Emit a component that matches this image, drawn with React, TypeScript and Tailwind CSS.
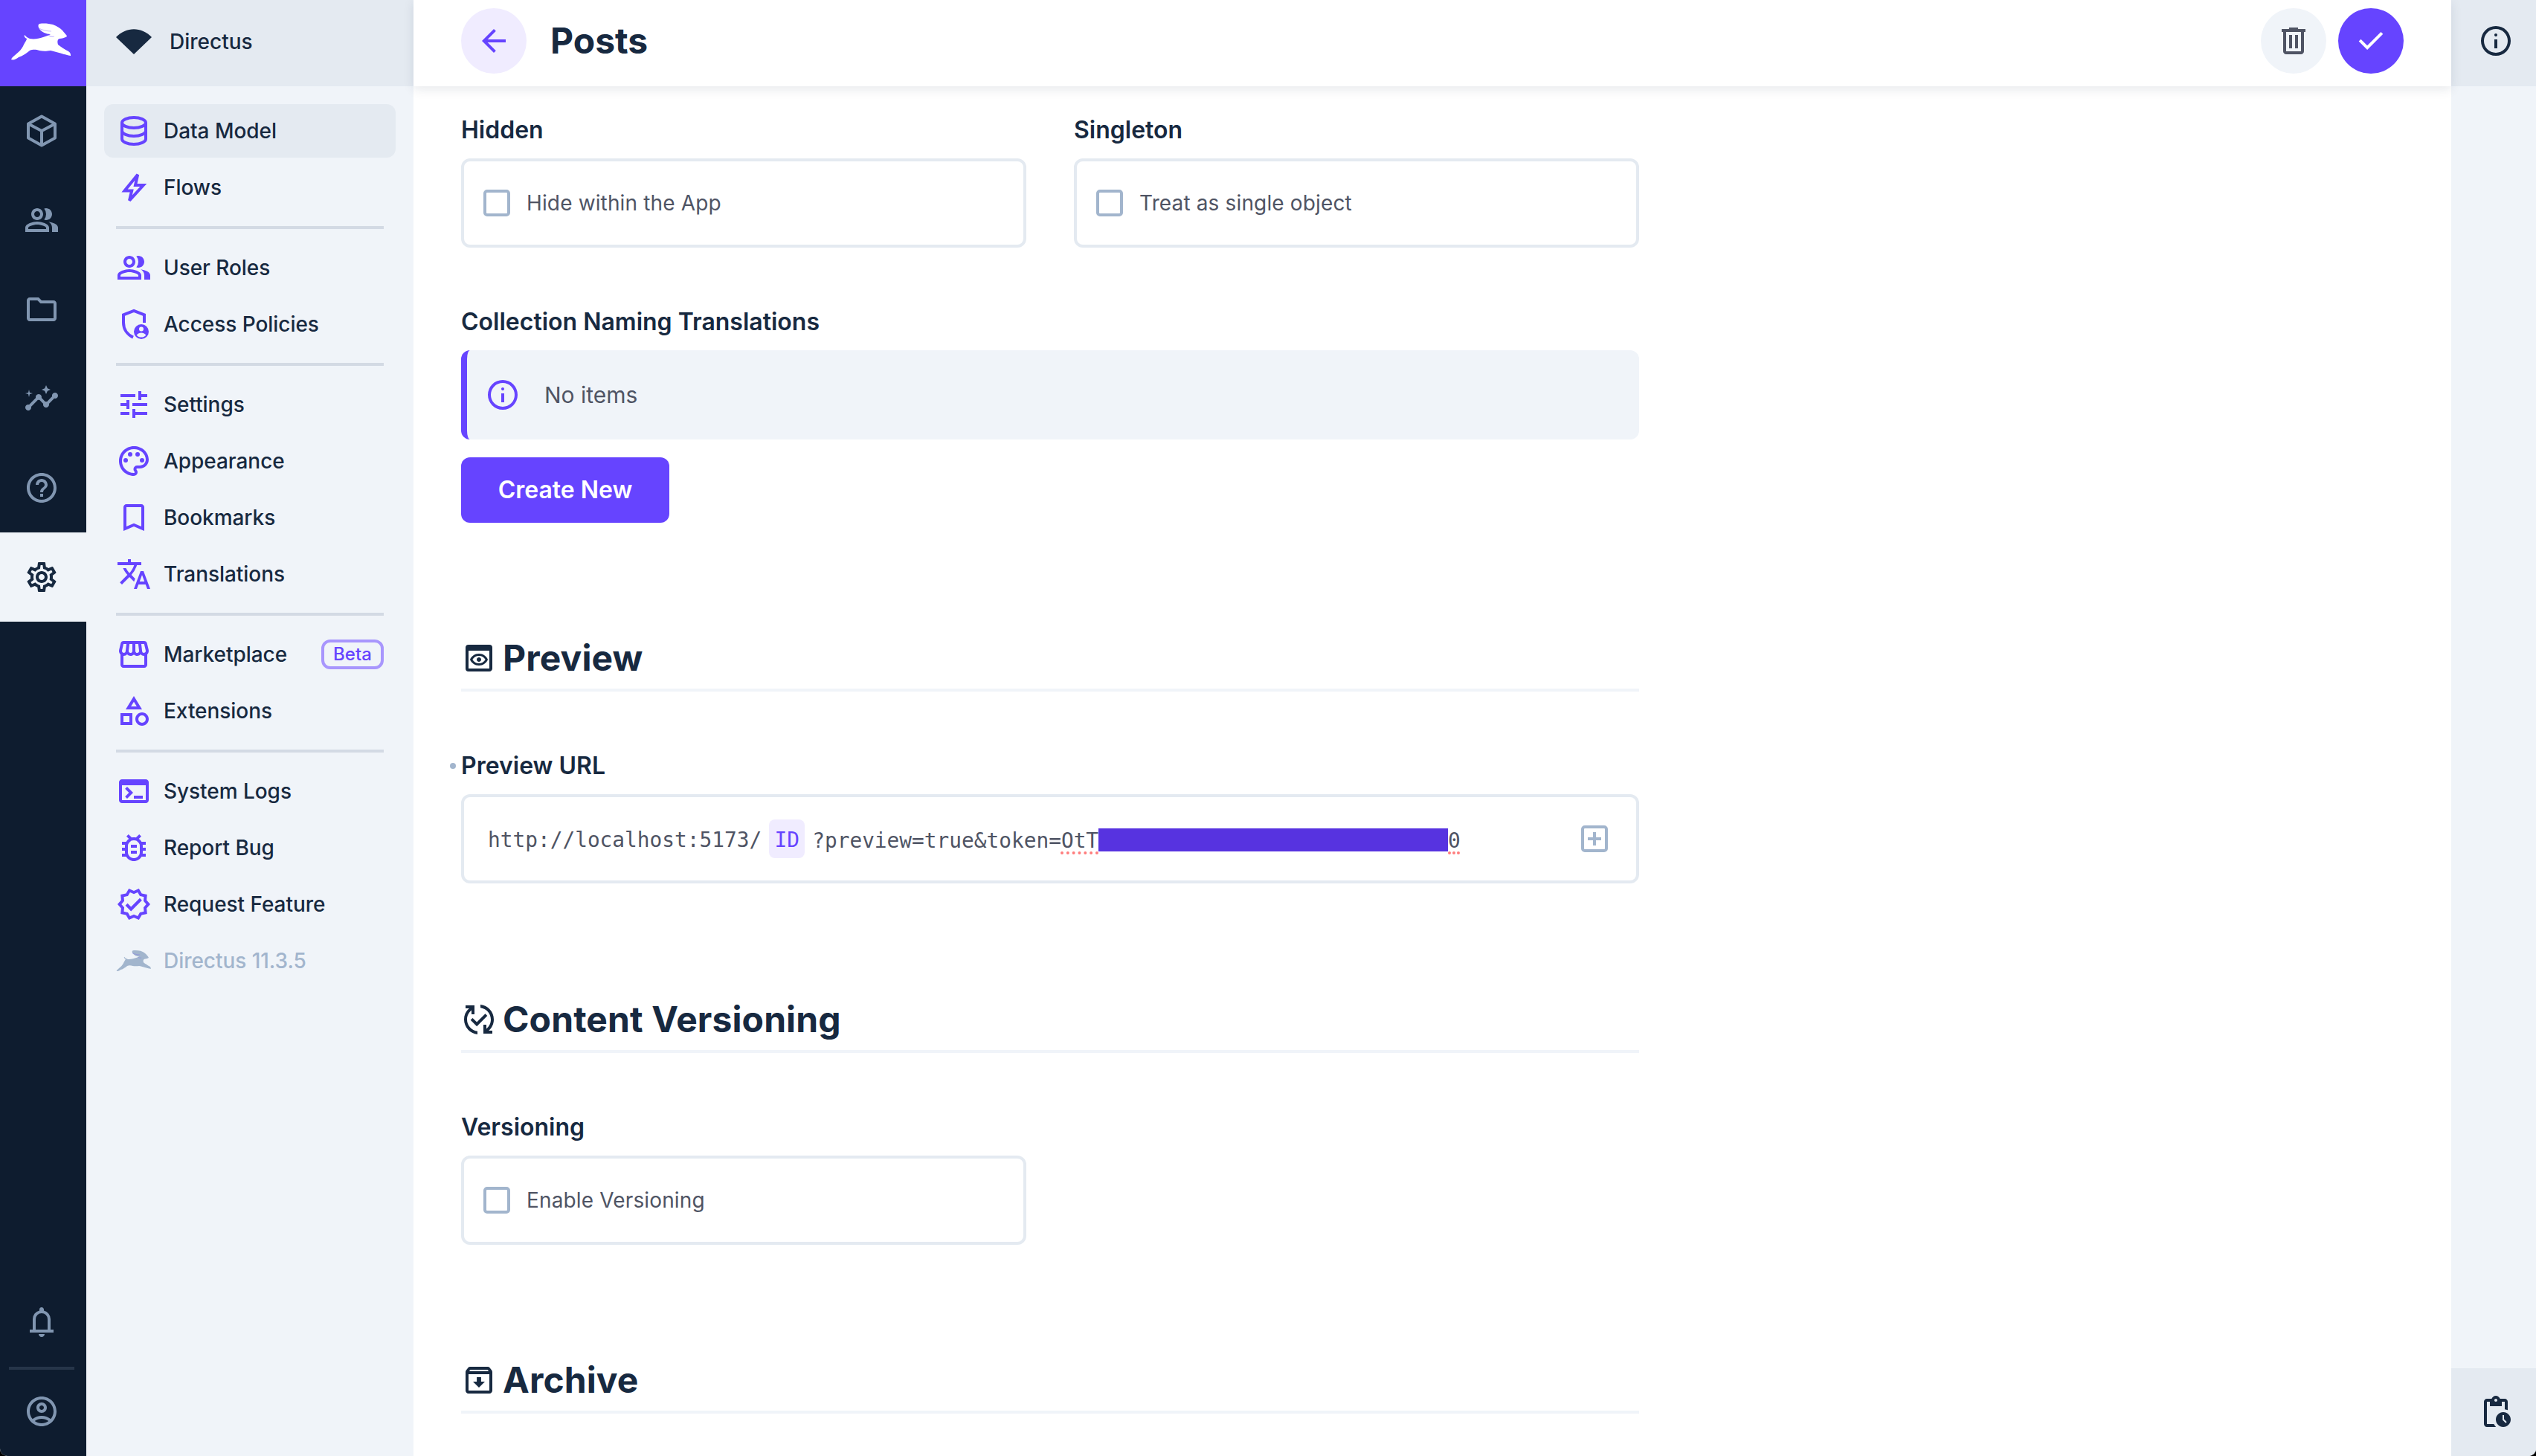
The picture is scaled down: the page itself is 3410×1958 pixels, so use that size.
import type { ReactNode } from "react"
import {
  MdOutlineAccountCircle,
  MdOutlineArchive,
  MdOutlineBookmarkBorder,
  MdOutlineBugReport,
  MdOutlineCategory,
  MdOutlineFolder,
  MdOutlineHelpOutline,
  MdOutlineInsights,
  MdOutlinePalette,
  MdOutlinePendingActions,
  MdOutlinePeopleAlt,
  MdOutlinePreview,
  MdOutlinePublishedWithChanges,
  MdOutlineSettings,
  MdOutlineStorefront,
  MdOutlineTranslate,
  MdOutlineTune,
  MdOutlineVerified,
} from "react-icons/md"

const infoPath =
  "M11 17h2v-6h-2v6Zm1-8q.425 0 .713-.288T13 8q0-.425-.288-.713T12 7q-.425 0-.713.288T11 8q0 .425.288.713T12 9Zm0 13q-2.075 0-3.9-.788t-3.175-2.137q-1.35-1.35-2.137-3.175T2 12q0-2.075.788-3.9t2.137-3.175q1.35-1.35 3.175-2.137T12 2q2.075 0 3.9.788t3.175 2.137q1.35 1.35 2.138 3.175T22 12q0 2.075-.788 3.9t-2.137 3.175q-1.35 1.35-3.175 2.138T12 22Zm0-2q3.35 0 5.675-2.325T20 12q0-3.35-2.325-5.675T12 4Q8.65 4 6.325 6.325T4 12q0 3.35 2.325 5.675T12 20Z"

function Sym({ d, className = "" }: { d: string; className?: string }) {
  return (
    <svg viewBox="0 0 24 24" fill="currentColor" className={`h-12 w-12 ${className}`}>
      <path d={d} />
    </svg>
  )
}

function CubeIcon() {
  return (
    <svg viewBox="0 0 24 24" fill="none" stroke="currentColor" strokeWidth="2" strokeLinejoin="round" className="h-12 w-12">
      <path d="M12 2.2 21 7.2V16.8L12 21.8 3 16.8V7.2Z" />
      <path d="M3 7.2 12 12 21 7.2M12 12V21.8" />
    </svg>
  )
}

function DatabaseIcon() {
  return (
    <svg viewBox="0 0 24 24" fill="none" stroke="currentColor" strokeWidth="2" className="h-12 w-12">
      <ellipse cx="12" cy="6.5" rx="8" ry="3.5" />
      <path d="M4 6.5v11c0 1.9 3.6 3.5 8 3.5s8-1.6 8-3.5v-11" />
      <path d="M4 12c0 1.9 3.6 3.5 8 3.5s8-1.6 8-3.5" />
    </svg>
  )
}

function BoltIcon() {
  return (
    <svg viewBox="0 0 24 24" fill="none" stroke="currentColor" strokeWidth="2" strokeLinejoin="miter" className="h-12 w-12">
      <path d="M14.6 3.4 5.8 14.2H10.6L9 20.8 18.4 10.5H13Z" />
    </svg>
  )
}

function ShieldPersonIcon() {
  return (
    <svg viewBox="0 0 24 24" className="h-12 w-12" fill="none" stroke="currentColor" strokeWidth="2">
      <path d="M19 11V5.7L12 3 5 5.7V11c0 4.400 2.600 8 6.500 9.800" />
      <circle cx="17" cy="17" r="5" fill="currentColor" stroke="none" />
      <circle cx="17" cy="15.300" r="1.500" fill="#f0f4f9" stroke="none" />
      <path d="M13.900 19.500c.8-1.200 1.900-1.700 3.100-1.700s2.300.5 3.100 1.700c-.8.8-1.900 1.300-3.100 1.300s-2.300-.5-3.100-1.300Z" fill="#f0f4f9" stroke="none" />
    </svg>
  )
}

// hand traced from the logo
function Rabbit({ className = "" }: { className?: string }) {
  return (
    <svg viewBox="14 30 83 52" className={className} fill="currentColor">
      <path d="M16 78C22 72 29 68 32 60 34 56 36 54 36 52 33 51 32 48 33 47 35 49 37 51 40 52 46 53 52 52 58 50 62 49 66 47 68 46 62 46 56 43 53 39 51 36 51 33 53 32 60 31 66 32 71 33 77 35 81 38 84 41 86 44 90 47 90 49 87 51 83 52 80 52 77 53 77 56 78 60 82 63 88 67 92 69 95 71 95 73 95 75 93 75 91 74 86 73 80 71 73 69 68 68 62 69 58 69 53 68 49 67 45 66 40 68 36 71 31 75 25 77 21 80 18 81 15 80 16 78Z" />
      <path d="M52 38C58 41 63 42 69 42M65 47C67 49 70 50 73 49" fill="none" stroke="#6644ff" strokeOpacity="0.35" strokeWidth="1.200" />
    </svg>
  )
}

function NavItem({ icon, label, active, faded, badge }: { icon: ReactNode; label: string; active?: boolean; faded?: boolean; badge?: string }) {
  return (
    <div className={`flex h-[72px] items-center rounded-xl pl-4 pr-4 ${active ? "bg-[#e4eaf1]" : ""}`}>
      <span className={`flex h-12 w-12 items-center justify-center ${faded ? "text-[#a2b5cd]" : "text-[#6644ff]"}`}>{icon}</span>
      <span className={`ml-4 flex-1 text-[28px] font-medium tracking-[-0.05px] ${faded ? "text-[#a2b5cd]" : "text-[#172940]"}`}>{label}</span>
      {badge && (
        <span className="flex h-10 w-[84px] items-center justify-center rounded-xl border-4 border-[#a896fd] text-[24px] font-medium text-[#6644ff]">
          {badge}
        </span>
      )}
    </div>
  )
}

function NavDivider() {
  return <div className="mx-4 my-4 h-1 bg-[#d3dae4]" />
}

function ModuleButton({ icon, active }: { icon: ReactNode; active?: boolean }) {
  return (
    <div className={`flex h-[120px] w-[116px] items-center pl-8 ${active ? "bg-[#f0f4f9] text-[#172940]" : "text-[#8196b1]"}`}>{icon}</div>
  )
}

function FieldLabel({ children }: { children: ReactNode }) {
  return <div className="mb-[18px] flex h-10 items-center text-[32px] font-semibold text-[#172940]">{children}</div>
}

function CheckboxField({ label, text }: { label: string; text: string }) {
  return (
    <div>
      <FieldLabel>{label}</FieldLabel>
      <div className="flex h-[120px] items-center rounded-xl border-4 border-[#e4eaf1] pl-[26px]">
        <span className="h-9 w-9 rounded-[5px] border-4 border-[#a2b5cd]" />
        <span className="ml-[22px] text-[28px] tracking-[0.14px] text-[#4f5464]">{text}</span>
      </div>
    </div>
  )
}

function SectionHeading({ icon, title, className = "" }: { icon: ReactNode; title: string; className?: string }) {
  return (
    <div className={`flex h-[75px] items-start border-b-4 border-[#f0f4f9] ${className}`}>
      <div className="flex h-[60px] items-center">
        <span className="flex h-12 w-12 items-center justify-center text-[#172940]">{icon}</span>
        <span className="ml-2 text-[48px] font-bold tracking-[0.1px] text-[#172940]">{title}</span>
      </div>
    </div>
  )
}

export default function App() {
  return (
    <div className="h-[1958px] w-[3410px] overflow-hidden bg-black font-['Inter',sans-serif]">
      <div className="flex h-full overflow-hidden rounded-b-[10px] bg-white">
        {/* module bar */}
        <aside className="flex w-[116px] shrink-0 flex-col bg-[#0e1c2f]">
          <div className="flex h-[116px] items-center justify-center bg-[#6644ff] pb-1 pr-[5px] text-white">
            <Rabbit className="h-[52px] w-[83px]" />
          </div>
          <ModuleButton icon={<CubeIcon />} />
          <ModuleButton icon={<MdOutlinePeopleAlt size={48} />} />
          <ModuleButton icon={<MdOutlineFolder size={48} />} />
          <ModuleButton icon={<MdOutlineInsights size={48} />} />
          <ModuleButton icon={<MdOutlineHelpOutline size={48} />} />
          <ModuleButton active icon={<MdOutlineSettings size={48} />} />
          <div className="flex-1" />
          <ModuleButton
            icon={
              <Sym d="M4 19v-2h2v-7q0-2.075 1.25-3.688T10.5 4.2v-.7q0-.625.438-1.063T12 2q.625 0 1.063.438T13.5 3.5v.7q2 .5 3.25 2.113T18 10v7h2v2H4Zm8-7.5ZM12 22q-.825 0-1.413-.588T10 20h4q0 .825-.588 1.413T12 22Zm-4-5h8v-7q0-1.65-1.175-2.825T12 6q-1.65 0-2.825 1.175T8 10v7Z" />
            }
          />
          <div className="ml-3 h-1 w-[88px] bg-[#263549]" />
          <div className="flex h-[116px] w-[116px] items-center pl-8 pb-1 text-[#8196b1]">
            <MdOutlineAccountCircle size={48} />
          </div>
        </aside>

        {/* navigation */}
        <nav className="flex w-[440px] shrink-0 flex-col bg-[#f0f4f9]">
          <div className="flex h-[116px] items-center bg-[#e4eaf1] pb-1 pl-10">
            <svg viewBox="0 0 48 34" className="h-[34px] w-12 text-[#172940]" fill="currentColor">
              <path d="M0 11C14-3.500 34-3.500 48 11L24 34Z" />
            </svg>
            <span className="ml-6 text-[28px] font-medium text-[#172940]">Directus</span>
          </div>
          <div className="flex flex-col gap-1 px-6 pt-6">
            <NavItem active icon={<DatabaseIcon />} label="Data Model" />
            <NavItem icon={<BoltIcon />} label="Flows" />
          </div>
          <div className="px-6">
            <NavDivider />
          </div>
          <div className="flex flex-col gap-1 px-6">
            <NavItem icon={<MdOutlinePeopleAlt size={48} />} label="User Roles" />
            <NavItem icon={<ShieldPersonIcon />} label="Access Policies" />
          </div>
          <div className="px-6">
            <NavDivider />
          </div>
          <div className="flex flex-col gap-1 px-6">
            <NavItem icon={<MdOutlineTune size={48} />} label="Settings" />
            <NavItem icon={<MdOutlinePalette size={48} />} label="Appearance" />
            <NavItem icon={<MdOutlineBookmarkBorder size={48} />} label="Bookmarks" />
            <NavItem icon={<MdOutlineTranslate size={48} />} label="Translations" />
          </div>
          <div className="px-6">
            <NavDivider />
          </div>
          <div className="flex flex-col gap-1 px-6">
            <NavItem icon={<MdOutlineStorefront size={48} />} label="Marketplace" badge="Beta" />
            <NavItem icon={<MdOutlineCategory size={48} />} label="Extensions" />
          </div>
          <div className="px-6">
            <NavDivider />
          </div>
          <div className="flex flex-col gap-1 px-6">
            <NavItem
              icon={
                <Sym d="M4 20q-.825 0-1.413-.588T2 18V6q0-.825.588-1.413T4 4h16q.825 0 1.413.588T22 6v12q0 .825-.588 1.413T20 20H4Zm0-2h16V8H4v10Zm3.5-1-1.4-1.4L8.675 13l-2.6-2.6L7.5 9l4 4-4 4Zm4.5 0v-2h6v2h-6Z" />
              }
              label="System Logs"
            />
            <NavItem icon={<MdOutlineBugReport size={48} />} label="Report Bug" />
            <NavItem icon={<MdOutlineVerified size={48} />} label="Request Feature" />
            <NavItem faded icon={<Rabbit className="h-[30px] w-12" />} label="Directus 11.3.5" />
          </div>
        </nav>

        {/* main column */}
        <main className="flex min-w-0 flex-1 flex-col">
          <header className="relative z-10 flex h-[116px] shrink-0 items-start bg-white pl-16 pr-[64px] pt-[11px] shadow-[0_4px_14px_rgba(23,41,64,0.1)]">
            <button className="flex h-[88px] w-[88px] items-center justify-center rounded-full bg-[#f0ecff] text-[#6644ff]">
              <Sym d="M7.825 13 13.425 18.6 12 20 4 12 12 4 13.425 5.4 7.825 11H20V13H7.825Z" />
            </button>
            <h1 className="ml-[32px] flex h-[88px] flex-1 items-center text-[48px] font-bold text-[#172940]">Posts</h1>
            <button className="flex h-[88px] w-[88px] items-center justify-center rounded-full bg-[#f0f4f9] text-[#4f5464]">
              <Sym d="M7 21q-.825 0-1.412-.587T5 19V6H4V4h5V3h6v1h5v2h-1v13q0 .825-.587 1.413T17 21H7ZM17 6H7v13h10V6ZM9 17h2V8H9v9Zm4 0h2V8h-2v9Z" />
            </button>
            <button className="ml-4 flex h-[88px] w-[88px] items-center justify-center rounded-full bg-[#6644ff] text-white">
              <Sym d="M9.55 18 3.85 12.3l1.425-1.425L9.55 15.15l9.175-9.175L20.15 7.4z" />
            </button>
          </header>

          <div className="w-[1648px] flex-1 overflow-hidden pl-16 pt-[39px]">
            <div className="w-[1584px]">
              <div className="grid grid-cols-2 gap-16">
                <CheckboxField label="Hidden" text="Hide within the App" />
                <CheckboxField label="Singleton" text="Treat as single object" />
              </div>

              <div className="mt-20">
                <FieldLabel>Collection Naming Translations</FieldLabel>
                <div className="flex h-[120px] items-center rounded-xl border-l-8 border-[#6644ff] bg-[#f0f4f9] pl-6">
                  <Sym d={infoPath} className="text-[#6644ff]" />
                  <span className="ml-[32px] text-[30px] text-[#4f5464]">No items</span>
                </div>
                <button className="mt-6 flex h-[88px] w-[280px] items-center justify-center rounded-xl bg-[#6644ff] text-[32px] font-semibold text-white">
                  Create New
                </button>
              </div>

              <SectionHeading className="mt-[152px]" icon={<MdOutlinePreview size={48} />} title="Preview" />

              <div className="relative mt-20">
                <span className="absolute left-[-15px] top-[16px] h-2 w-2 rounded-full bg-[#a2b5cd]" />
                <FieldLabel>Preview URL</FieldLabel>
                <div className="flex h-[120px] items-center rounded-xl border-4 border-[#e4eaf1] pl-8 pr-[38px] font-['DejaVu_Sans_Mono',monospace] text-[27.8px] text-[#4f5464]">
                  <span className="pt-1">http://localhost:5173/</span>
                  <span className="ml-[10px] flex h-[52px] w-12 items-center justify-center rounded-lg bg-[#f0ecff] pt-1 text-[#6644ff]">ID</span>
                  <span className="ml-[10px] flex-1 whitespace-pre pt-1">
                    ?preview=true&amp;token=
                    <span className="underline decoration-[#ff7d7d] decoration-dotted decoration-4 underline-offset-[6px]">OtT</span>
                    <span className="inline-block h-[31px] w-[470px] translate-y-[5px] bg-[#5733e0]" />
                    <span className="underline decoration-[#ff7d7d] decoration-dotted decoration-4 underline-offset-[6px]">0</span>
                  </span>
                  <svg viewBox="0 0 36 36" className="h-9 w-9 text-[#a2b5cd]" fill="none" stroke="currentColor" strokeWidth="4">
                    <rect x="2" y="2" width="32" height="32" rx="3" />
                    <path d="M18 9V27M9 18H27" />
                  </svg>
                </div>
              </div>

              <SectionHeading className="mt-[153px]" icon={<MdOutlinePublishedWithChanges size={48} />} title="Content Versioning" />

              <div className="mt-20 grid grid-cols-2 gap-16">
                <CheckboxField label="Versioning" text="Enable Versioning" />
              </div>

              <SectionHeading className="mt-[152px]" icon={<MdOutlineArchive size={48} />} title="Archive" />
            </div>
          </div>
        </main>

        {/* sidebar */}
        <aside className="flex w-[114px] shrink-0 flex-col bg-[#f0f4f9]">
          <div className="flex h-[116px] items-center justify-center bg-[#e4eaf1] pb-[6px] pl-[6px] text-[#172940]">
            <Sym d={infoPath} />
          </div>
          <div className="flex-1" />
          <div className="flex h-[118px] items-center justify-center bg-[#e4eaf1] pl-[6px] text-[#172940]">
            <MdOutlinePendingActions size={48} />
          </div>
        </aside>
      </div>
    </div>
  )
}
